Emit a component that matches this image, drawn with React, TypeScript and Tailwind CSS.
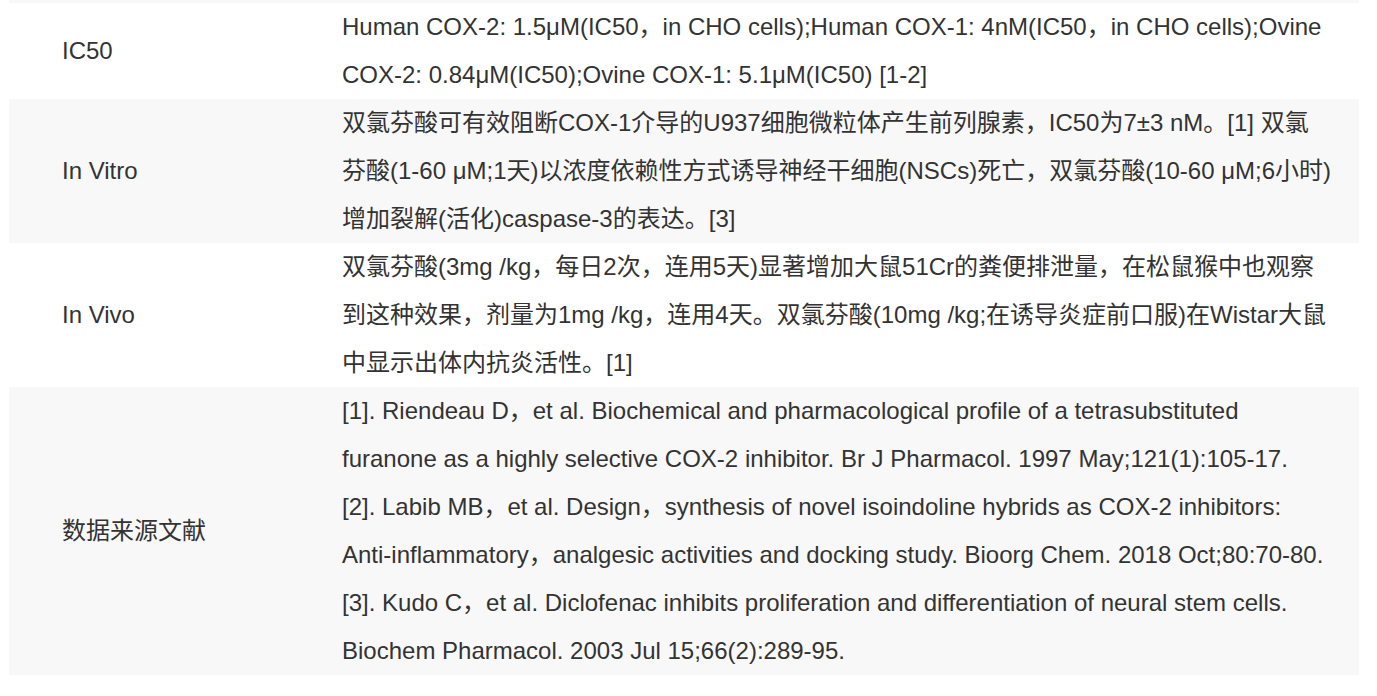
const rows: { label: string; lines: string[] }[] = [
  {
    label: 'IC50',
    lines: [
      'Human COX-2: 1.5μM(IC50，in CHO cells);Human COX-1: 4nM(IC50，in CHO cells);Ovine COX-2: 0.84μM(IC50);Ovine COX-1: 5.1μM(IC50) [1-2]',
    ],
  },
  {
    label: 'In Vitro',
    lines: [
      '双氯芬酸可有效阻断COX-1介导的U937细胞微粒体产生前列腺素，IC50为7±3 nM。[1] 双氯芬酸(1-60 μM;1天)以浓度依赖性方式诱导神经干细胞(NSCs)死亡，双氯芬酸(10-60 μM;6小时)增加裂解(活化)caspase-3的表达。[3]',
    ],
  },
  {
    label: 'In Vivo',
    lines: [
      '双氯芬酸(3mg /kg，每日2次，连用5天)显著增加大鼠51Cr的粪便排泄量，在松鼠猴中也观察到这种效果，剂量为1mg /kg，连用4天。双氯芬酸(10mg /kg;在诱导炎症前口服)在Wistar大鼠中显示出体内抗炎活性。[1]',
    ],
  },
  {
    label: '数据来源文献',
    lines: [
      '[1]. Riendeau D，et al. Biochemical and pharmacological profile of a tetrasubstituted furanone as a highly selective COX-2 inhibitor. Br J Pharmacol. 1997 May;121(1):105-17.',
      '[2]. Labib MB，et al. Design，synthesis of novel isoindoline hybrids as COX-2 inhibitors: Anti-inflammatory，analgesic activities and docking study. Bioorg Chem. 2018 Oct;80:70-80.',
      '[3]. Kudo C，et al. Diclofenac inhibits proliferation and differentiation of neural stem cells. Biochem Pharmacol. 2003 Jul 15;66(2):289-95.',
    ],
  },
]

export default function App() {
  return (
    <div
      className="w-[1377px] h-[696px] bg-white overflow-hidden text-[#333] text-[24px] leading-[48px]"
      style={{ fontFamily: '"Liberation Sans", "Noto Sans CJK SC", sans-serif' }}
    >
      <table className="ml-[9px] w-[1350px] border-collapse">
        <tbody>
          <tr className="bg-[#f8f8f8]">
            <td className="h-[3px] p-0" colSpan={2}></td>
          </tr>
          {rows.map((row, i) => (
            <tr key={row.label} className={i % 2 === 1 ? 'bg-[#f8f8f8]' : 'bg-white'}>
              <td className="w-[333px] pl-[53px] p-0 align-middle">{row.label}</td>
              <td className="p-0 pr-[27px] align-middle">
                {row.lines.map((line) => (
                  <div key={line}>{line}</div>
                ))}
              </td>
            </tr>
          ))}
        </tbody>
      </table>
    </div>
  )
}
